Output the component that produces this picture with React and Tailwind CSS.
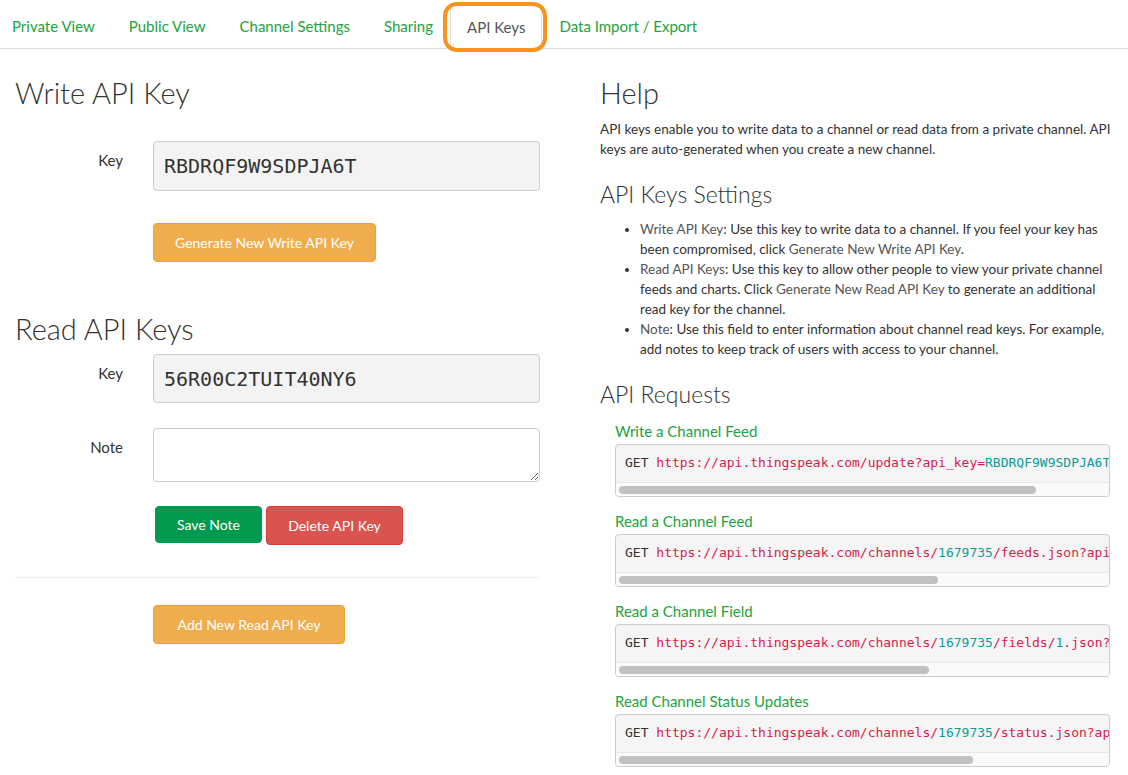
import React from "react";

const body = { fontFamily: "Lato, 'Open Sans', sans-serif" };
const head = { fontFamily: "Lato, 'Open Sans', sans-serif" };
const mono = { fontFamily: "'DejaVu Sans Mono', 'Liberation Mono', monospace" };

const tabs = ["Private View", "Public View", "Channel Settings", "Sharing", "API Keys", "Data Import / Export"];

function Nav() {
  return (
    <div className="relative h-[49px] border-b border-[#dddddd]">
      <div className="flex items-end h-[49px] -ml-[5px]">
        {tabs.map((t) =>
          t === "API Keys" ? (
            <div key={t} className="relative mb-[-1px]">
              <div className="h-[45px] px-[16px] flex items-center bg-white border border-[#dddddd] border-b-white rounded-t-[4px] text-[15px] text-[#555555]">
                {t}
              </div>
              {/* orange highlight */}
              <div className="absolute -left-[7px] -right-[5px] -top-[3px] -bottom-[2px] border-[4px] border-[#f7931e] rounded-[14px] pointer-events-none"></div>
            </div>
          ) : (
            <div key={t} className="h-[45px] px-[16px] flex items-center text-[15px] text-[#22a33f] border border-transparent">
              {t}
            </div>
          )
        )}
      </div>
    </div>
  );
}

function Btn({ color, children, className = "" }) {
  return (
    <button className={"text-white text-[14px] rounded-[4px] border " + color + " " + className} style={head}>
      {children}
    </button>
  );
}

function Left() {
  return (
    <div className="w-[525px] ml-[15px]">
      <h2 className="text-[29px] leading-[30px] font-light text-[#333333] mt-[29px]" style={head}>
        Write API Key
      </h2>

      <div className="flex mt-[33px]">
        <div className="w-[108px] text-right text-[15px] text-[#333333] pt-[8px]">Key</div>
        <div className="ml-[30px] flex-1 h-[50px] bg-[#f3f3f3] border border-[#cccccc] rounded-[4px] flex items-center px-[10px] text-[20px] text-[#333333]" style={mono}>
          RBDRQF9W9SDPJA6T
        </div>
      </div>

      <div className="ml-[138px] mt-[32px]">
        <Btn color="bg-[#f0ad4e] border-[#eea236] h-[39px] px-[21px]">Generate New Write API Key</Btn>
      </div>

      <h2 className="text-[29px] leading-[30px] font-light text-[#333333] mt-[52px]" style={head}>
        Read API Keys
      </h2>

      <div className="flex mt-[10px]">
        <div className="w-[108px] text-right text-[15px] text-[#333333] pt-[8px]">Key</div>
        <div className="ml-[30px] flex-1 h-[49px] bg-[#f3f3f3] border border-[#cccccc] rounded-[4px] flex items-center px-[10px] text-[20px] text-[#333333]" style={mono}>
          56R00C2TUIT40NY6
        </div>
      </div>

      <div className="flex mt-[25px]">
        <div className="w-[108px] text-right text-[15px] text-[#333333] pt-[8px]">Note</div>
        <textarea className="ml-[30px] flex-1 h-[54px] bg-white border border-[#cccccc] rounded-[4px] resize-y outline-none"></textarea>
      </div>

      <div className="ml-[140px] mt-[24px] flex items-start gap-[4px]">
        <Btn color="bg-[#009b4e] border-[#009b4e] h-[37px] w-[107px]">Save Note</Btn>
        <Btn color="bg-[#d9534f] border-[#d43f3a] h-[39px] w-[137px]">Delete API Key</Btn>
      </div>

      <div className="mt-[32px] border-t border-[#eeeeee]"></div>

      <div className="ml-[138px] mt-[27px]">
        <Btn color="bg-[#f0ad4e] border-[#eea236] h-[39px] w-[192px]">Add New Read API Key</Btn>
      </div>
    </div>
  );
}

function Code({ title, parts, thumb }) {
  return (
    <div className="mt-[14px]">
      <div className="text-[15px] leading-[20px] text-[#22a33f]">{title}</div>
      <div className="mt-[3px] w-[495px] border border-[#cccccc] rounded-[4px] bg-[#f5f5f5] overflow-hidden">
        <div className="pt-[9px] pb-[11px] px-[9px] text-[13px] leading-[17px] whitespace-nowrap overflow-hidden" style={mono}>
          <span className="text-[#333333]">GET </span>
          {parts.map(([txt, c], i) => (
            <span key={i} className={c === "t" ? "text-[#0b9d95]" : "text-[#d81b4b]"}>
              {txt}
            </span>
          ))}
        </div>
        <div className="h-[14px] bg-[#fafafa] border-t border-[#e8e8e8] flex items-center px-[3px]">
          <div className="h-[8px] rounded-full bg-[#c1c1c1]" style={{ width: thumb }}></div>
        </div>
      </div>
    </div>
  );
}

function Right() {
  return (
    <div className="w-[515px] ml-[60px]">
      <h2 className="text-[29px] leading-[30px] font-light text-[#333333] mt-[29px]" style={head}>
        Help
      </h2>
      <p className="mt-[11px] text-[13.5px] leading-[20px] text-[#333333]">
        API keys enable you to write data to a channel or read data from a private channel. API keys are auto-generated when you create a new channel.
      </p>

      <h3 className="mt-[22px] text-[23px] leading-[26px] font-light text-[#333333]" style={head}>
        API Keys Settings
      </h3>
      <ul className="mt-[12px] list-disc pl-10 text-[13.5px] leading-[20px] text-[#333333]">
        <li>
          <span className="text-[#555555]">Write API Key</span>: Use this key to write data to a channel. If you feel your key has been compromised, click <span className="text-[#555555]">Generate New Write API Key</span>.
        </li>
        <li>
          <span className="text-[#555555]">Read API Keys</span>: Use this key to allow other people to view your private channel feeds and charts. Click <span className="text-[#555555]">Generate New Read API Key</span> to generate an additional read key for the channel.
        </li>
        <li>
          <span className="text-[#555555]">Note</span>: Use this field to enter information about channel read keys. For example, add notes to keep track of users with access to your channel.
        </li>
      </ul>

      <h3 className="mt-[22px] text-[23px] leading-[26px] font-light text-[#333333]" style={head}>
        API Requests
      </h3>
      <div className="pl-[15px]">
        <Code
          title="Write a Channel Feed"
          parts={[["https://api.thingspeak.com/update?api_key=", "r"], ["RBDRQF9W9SDPJA6T&field1=0", "t"]]}
          thumb={417}
        />
        <Code
          title="Read a Channel Feed"
          parts={[["https://api.thingspeak.com/channels/", "r"], ["1679735", "t"], ["/feeds.json?api_key=", "r"], ["56R00C2TUIT40NY6", "t"], ["&results=", "r"], ["2", "t"]]}
          thumb={319}
        />
        <Code
          title="Read a Channel Field"
          parts={[["https://api.thingspeak.com/channels/", "r"], ["1679735", "t"], ["/fields/", "r"], ["1", "t"], [".json?api_key=", "r"], ["56R00C2TUIT40NY6", "t"], ["&results=", "r"], ["2", "t"]]}
          thumb={310}
        />
        <Code
          title="Read Channel Status Updates"
          parts={[["https://api.thingspeak.com/channels/", "r"], ["1679735", "t"], ["/status.json?api_key=", "r"], ["56R00C2TUIT40NY6", "t"]]}
          thumb={354}
        />
      </div>
    </div>
  );
}

export default function App() {
  return (
    <div className="min-h-screen bg-white overflow-hidden" style={body}>
      <Nav />
      <div className="flex">
        <Left />
        <Right />
      </div>
    </div>
  );
}
